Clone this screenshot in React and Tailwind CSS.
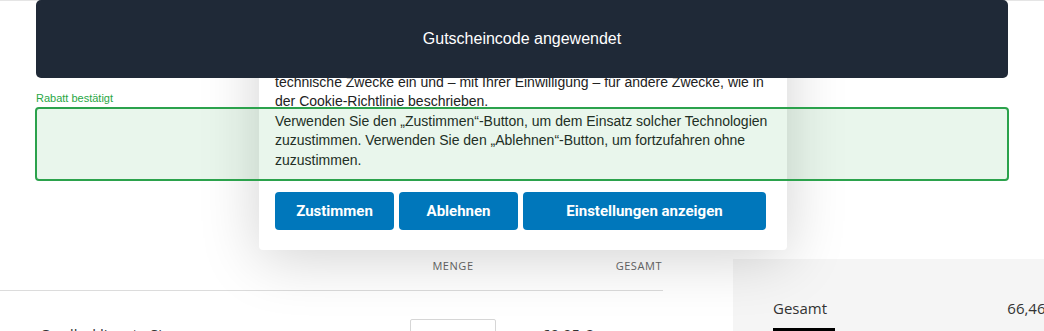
import React from "react";

const CookieModal = () => (
  <div className="absolute left-[259px] top-0 z-10 flex h-[250px] w-[528px] flex-col justify-end overflow-hidden rounded-b-[4px] bg-white px-[16px] pb-[20px] shadow-[0_8px_60px_rgba(0,0,0,0.18)]">
    <p className="text-[14px] leading-[19.5px] text-[#222] font-['Liberation_Sans',Arial,sans-serif]">
      Wir und ausgewählte Dritte setzen Cookies oder ähnliche Technologien für
      technische Zwecke ein und – mit Ihrer Einwilligung – für andere Zwecke, wie in
      der <span className="underline">Cookie-Richtlinie</span> beschrieben.
      <br />
      Verwenden Sie den „Zustimmen“-Button, um dem Einsatz solcher Technologien
      zuzustimmen. Verwenden Sie den „Ablehnen“-Button, um fortzufahren ohne
      zuzustimmen.
    </p>
    <div className="mt-[22px] flex gap-[5px] font-['Roboto',sans-serif] text-[15px] font-bold text-white">
      <button className="h-[38px] w-[119px] rounded-[4px] bg-[#0077bb]">Zustimmen</button>
      <button className="h-[38px] w-[119px] rounded-[4px] bg-[#0077bb]">Ablehnen</button>
      <button className="h-[38px] w-[243px] rounded-[4px] bg-[#0077bb]">Einstellungen anzeigen</button>
    </div>
  </div>
);

const Toast = () => (
  <div className="absolute left-[36px] top-0 z-30 flex h-[78px] w-[972px] items-center justify-center rounded-[5px] bg-[#1f2937] font-['Liberation_Sans',Arial,sans-serif] text-[16px] text-white">
    Gutscheincode angewendet
  </div>
);

export default function App() {
  return (
    <div className="relative h-[331px] w-[1044px] overflow-hidden bg-white font-['Open_Sans',sans-serif]">
      <div className="h-px bg-[#e5e5e5]" />

      <div className="px-[35px] pt-[90px]">
        <p className="pl-[1px] text-[11px] leading-[14px] text-[#28a745] font-['Liberation_Sans',Arial,sans-serif]">
          Rabatt bestätigt
        </p>
        <div className="relative z-20 mt-[2px] h-[74px] rounded-[4px] border-2 border-[#2ba24c] bg-[rgba(40,167,69,0.1)]" />
      </div>

      <div className="mt-[78px] flex">
        <div className="w-[663px]">
          <div className="flex h-[32px] border-b border-[#dcdcdc] text-[11px] leading-[14px] tracking-[0.05em] text-[#666]">
            <div className="flex-1" />
            <div className="w-[130px] text-center">MENGE</div>
            <div className="w-[145px] pr-[1px] text-right">GESAMT</div>
          </div>
          <div className="flex pt-[28px] text-[15px] text-[#333]">
            <div className="flex-1 pl-[40px] pt-[4px]">Cordbuklienste Sie</div>
            <div className="w-[130px] pl-[22px]">
              <div className="flex h-[34px] w-[86px] items-center justify-center gap-[18px] rounded-[2px] border border-[#d6d6d6]">
                <span>1</span>
                <span>+</span>
              </div>
            </div>
            <div className="w-[145px] pl-[24px] pt-[4px]">69,95 €</div>
          </div>
        </div>
        <div className="ml-[70px] flex-1 bg-[#f5f5f5] pl-[40px] pt-[38px]">
          <div className="flex justify-between text-[15px] leading-[22px] text-[#333]">
            <span>Gesamt</span>
            <span className="-mr-[14px]">66,46 €</span>
          </div>
          <div className="mt-[9px] h-[10px] w-[62px] bg-black" />
        </div>
      </div>

      <CookieModal />
      <Toast />
    </div>
  );
}
